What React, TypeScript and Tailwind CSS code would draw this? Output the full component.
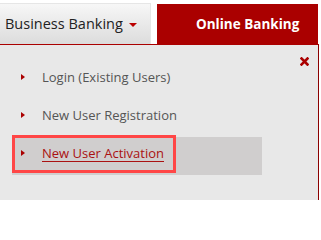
const links = [
  { name: "Login (Existing Users)", active: false },
  { name: "New User Registration", active: false },
  { name: "New User Activation", active: true },
];

export default function App() {
  return (
    <div className="w-[321px] h-[200px] bg-white overflow-hidden font-['Open_Sans',sans-serif]">
      {/* Top tabs */}
      <div className="flex h-[44px]">
        <div className="mt-[3px] w-[151px] h-[41px] flex items-center pl-[5px] bg-gradient-to-b from-[#f7f7f7] to-[#dcdcdc] border-t border-r border-[#e6e6e6] text-[14.5px] text-[#222]">
          Business Banking
          <span className="ml-[6px] mt-[1px] w-0 h-0 border-x-[4px] border-x-transparent border-t-[4px] border-t-[#b00]" />
        </div>
        <div className="ml-[6px] mt-[4px] w-[161px] h-[40px] flex items-center pl-[39px] bg-[#aa0000] text-white font-bold text-[13.5px]">
          Online Banking
        </div>
      </div>

      {/* Dropdown panel */}
      <div className="relative w-[319px] h-[156px] bg-[#e8e8e8] border-t border-t-[#aa0000] border-r border-r-[#8b0000] pt-[16px]">
        <button className="absolute right-[9px] top-[12px] text-[#aa0000]">
          <svg width="9" height="9" viewBox="0 0 9 9">
            <path d="M1.5 1.5L7.5 7.5M7.5 1.5L1.5 7.5" stroke="currentColor" strokeWidth="2.6" strokeLinecap="square" />
          </svg>
        </button>
        <ul className="ml-[12px] w-[250px]">
          {links.map((link) => (
            <li
              key={link.name}
              className={`relative flex items-center h-[38px] pb-[4px] ${link.active ? "bg-[#d0cece]" : ""}`}
            >
              <span className="ml-[9px] mb-[2px] w-0 h-0 border-y-[3px] border-y-transparent border-l-[4px] border-l-[#aa0000]" />
              <a
                href="#"
                className={`ml-[17px] text-[13px] ${link.active ? "text-[#aa1111] underline underline-offset-[3px]" : "text-[#555]"}`}
              >
                {link.name}
              </a>
              {link.active && (
                <span className="absolute left-0 top-[-2px] w-[164px] h-[38px] border-[3px] border-[#ff4646]" />
              )}
            </li>
          ))}
        </ul>
      </div>
    </div>
  );
}
